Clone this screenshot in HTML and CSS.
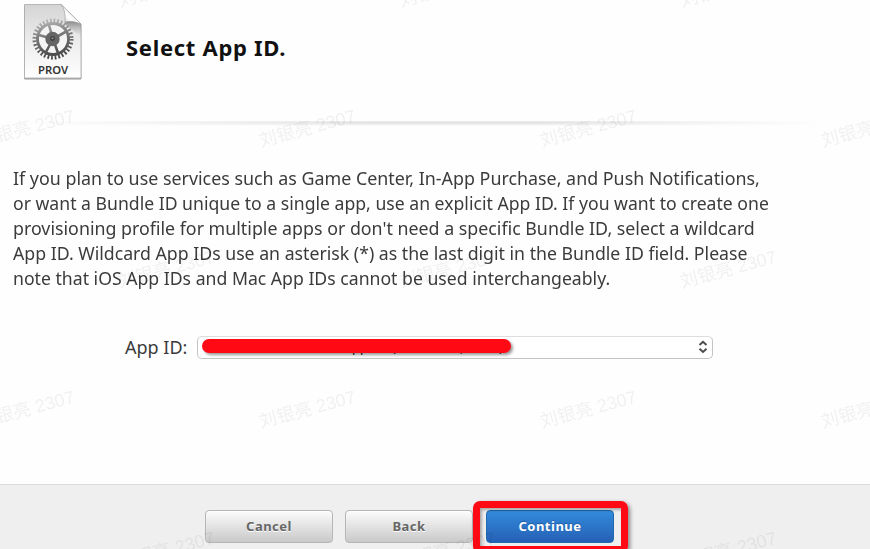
FILE: index.html
```
<!DOCTYPE html>
<html lang="en">
<head>
<meta charset="utf-8">
<title>Select App ID</title>
<link rel="stylesheet" href="styles.css">
</head>
<body>
<div class="page">
  <header class="header">
    <svg class="prov-icon" width="64" height="82" viewBox="0 0 64 82">
      <defs>
        <linearGradient id="paper" x1="0" y1="0" x2="0" y2="1"><stop offset="0" stop-color="#d5d5d5"/><stop offset=".6" stop-color="#f0f0f0"/><stop offset="1" stop-color="#fff"/></linearGradient>
        <linearGradient id="fold" x1="0" y1="1" x2="1" y2="0"><stop offset="0" stop-color="#b8b8b8"/><stop offset=".35" stop-color="#fff"/><stop offset="1" stop-color="#ddd"/></linearGradient>
        <linearGradient id="metal" gradientUnits="userSpaceOnUse" x1="28" y1="18" x2="36" y2="59"><stop offset="0" stop-color="#bbb"/><stop offset=".45" stop-color="#777"/><stop offset="1" stop-color="#424242"/></linearGradient>
        <linearGradient id="shade" x1="0" y1="0" x2="0" y2="1"><stop offset="0" stop-color="#555"/><stop offset="1" stop-color="#aaa" stop-opacity="0"/></linearGradient>
        <filter id="soft" x="-10%" y="-10%" width="120%" height="120%"><feDropShadow dx="0" dy="1" stdDeviation=".7" flood-opacity=".5"/></filter>
      </defs>
      <path d="M4.500 4.500H41L61 24V78H4.500Z" fill="url(#paper)" stroke="#aaa" stroke-width=".8" filter="url(#soft)"/>
      <path d="M45 20H55L61 24V37L45 24Z" fill="url(#shade)" opacity=".7"/>
      <circle cx="33" cy="39" r="14" fill="#f4f4f4"/>
      <g fill="none" stroke="url(#metal)">
        <circle cx="33" cy="39" r="18.400" stroke-width="4.200" stroke-dasharray="1.750 1.862"/>
        <circle cx="33" cy="39" r="15.500" stroke-width="2.800"/>
        <path d="M33 39L19 35M33 39L26 52M33 39L38 53M33 39L47 31M33 39L29 25" stroke-width="2.600"/>
      </g>
      <circle cx="32.500" cy="39" r="7.200" fill="#656565"/><circle cx="32.500" cy="38.500" r="2.400" fill="#3d3d3d"/><circle cx="32.500" cy="38.300" r="1" fill="#999"/>
      <path d="M41 4.500L61 24Q53 20 45 22Q46 10 41 4.500Z" fill="url(#fold)" stroke="#999" stroke-width=".6"/>
      <text class="prov-label" x="33" y="73.500" text-anchor="middle" textLength="30" lengthAdjust="spacingAndGlyphs">PROV</text>
    </svg>
    <h1 class="title">Select App ID.</h1>
  </header>
  <div class="divider"></div>
  <main class="content">
    <p class="description">
      <span class="line l1">If you plan to use services such as Game Center, In-App Purchase, and Push Notifications,</span>
      <span class="line l2">or want a Bundle ID unique to a single app, use an explicit App ID. If you want to create one</span>
      <span class="line l3">provisioning profile for multiple apps or don't need a specific Bundle ID, select a wildcard</span>
      <span class="line l4">App ID. Wildcard App IDs use an asterisk (*) as the last digit in the Bundle ID field. Please</span>
      <span class="line l5">note that iOS App IDs and Mac App IDs cannot be used interchangeably.</span>
    </p>
    <div class="field">
      <span class="field-label">App ID:</span>
      <div class="select">
        <span class="value"><span>pp</span><span>(</span><span>,</span><span>)</span></span>
        <span class="redaction"></span>
        <svg class="arrows" width="10" height="14" viewBox="0 0 10 14"><path d="M1.500 5L5 1.800L8.500 5M1.500 8.800L5 12L8.500 8.800" fill="none" stroke="#4b4b4b" stroke-width="1.900"/></svg>
      </div>
    </div>
  </main>
  <footer class="footer">
    <button class="button">Cancel</button>
    <button class="button">Back</button>
    <div class="primary-wrap"><button class="button primary">Continue</button><span class="highlight"></span></div>
  </footer>
  <svg class="watermark" width="870" height="549" viewBox="0 0 870 549">
    <g>
      <text transform="translate(120 7) rotate(-15)">刘银亮 2307</text>
      <text transform="translate(401 7) rotate(-15)">刘银亮 2307</text>
      <text transform="translate(682 7) rotate(-15)">刘银亮 2307</text>
      <text transform="translate(-20 147) rotate(-15)">刘银亮 2307</text>
      <text transform="translate(261 147) rotate(-15)">刘银亮 2307</text>
      <text transform="translate(542 147) rotate(-15)">刘银亮 2307</text>
      <text transform="translate(823 147) rotate(-15)">刘银亮 2307</text>
      <text transform="translate(120 288) rotate(-15)">刘银亮 2307</text>
      <text transform="translate(401 288) rotate(-15)">刘银亮 2307</text>
      <text transform="translate(682 288) rotate(-15)">刘银亮 2307</text>
      <text transform="translate(-20 428) rotate(-15)">刘银亮 2307</text>
      <text transform="translate(261 428) rotate(-15)">刘银亮 2307</text>
      <text transform="translate(542 428) rotate(-15)">刘银亮 2307</text>
      <text transform="translate(823 428) rotate(-15)">刘银亮 2307</text>
      <text transform="translate(120 569) rotate(-15)">刘银亮 2307</text>
      <text transform="translate(401 569) rotate(-15)">刘银亮 2307</text>
      <text transform="translate(682 569) rotate(-15)">刘银亮 2307</text>
    </g>
  </svg>
</div>
</body>
</html>
```
FILE: styles.css
```
* { box-sizing: border-box; }
body { margin: 0; background: #fefefe; font-family: "Noto Sans", sans-serif; color: #3b3b3b; }
.page { position: relative; width: 870px; height: 549px; overflow: hidden; display: flex; flex-direction: column; }
.header { display: flex; height: 121px; padding-left: 20px; flex: none; }
.prov-icon { flex: none; }
.prov-label { font: 600 10.500px "Noto Sans", sans-serif; fill: #333; }
.title { margin: 32px 0 0 42px; font-size: 22px; line-height: 30px; font-weight: 700; letter-spacing: .7px; color: #111; white-space: nowrap; }
.divider { height: 5px; flex: none; width: 835px; background: linear-gradient(90deg, #fefefe 2%, transparent 45%, transparent 65%, #fefefe 99%), linear-gradient(#ececec, #e2e2e2 40%, #fefefe); }
.content { flex: 1; padding: 40px 13px 0; }
.description { margin: 0; font-size: 18px; line-height: 25px; }
.line { display: block; white-space: nowrap; width: max-content; transform-origin: left; }
.l1 { transform: scaleX(.992); }
.l2 { transform: scaleX(.979); }
.l3 { transform: scaleX(.989); }
.l4 { transform: scaleX(.983); }
.l5 { transform: scaleX(.980); }
.field { display: flex; align-items: center; margin: 44px 0 0 112px; height: 24px; font-size: 18px; }
.field-label { width: 72px; white-space: nowrap; }
.select { position: relative; width: 516px; height: 23px; border: 1px solid #c4c4c4; border-top-color: #ddd; border-radius: 5px; background: #fff; display: flex; align-items: center; justify-content: flex-end; padding-right: 4px; }
.value { position: absolute; left: 154px; top: 0; display: grid; grid-template-columns: 40px 68px 39px 10px; font-size: 13px; line-height: 20px; color: #222; }
.redaction { position: absolute; left: 4px; top: 2px; width: 309px; height: 14px; border-radius: 7px; background: #ff0915; box-shadow: 2px 2px 3px rgba(0,0,0,.4); }
.footer { height: 65px; flex: none; border-top: 1px solid #dcdcdc; background: #efefef; display: flex; gap: 12px; padding: 25px 0 0 205px; }
.button { width: 128px; height: 33px; padding: 0 0 2px; border: 1px solid #b5b5b5; border-radius: 4px; background: linear-gradient(#fcfcfc, #c9c9c9); box-shadow: inset 0 1px 1px #fff; color: #666; font: 700 13px/28px "Noto Sans", sans-serif; letter-spacing: .5px; text-shadow: 0 1px 0 #fff; }
.primary { border-color: #2168ac; background: linear-gradient(#338bdc, #2560b5); color: #fff; text-shadow: 0 -1px 1px #2058a0; box-shadow: none; }
.primary-wrap { position: relative; height: 33px; margin-left: 1px; }
.highlight { position: absolute; left: -13px; top: -9px; width: 155px; height: 52px; border: 7px solid #ff0915; border-radius: 7px; box-shadow: 2px 2px 4px rgba(0,0,0,.45), inset 2px 2px 3px rgba(0,0,0,.3); }
.watermark { position: absolute; inset: 0; pointer-events: none; font: 18px "Liberation Sans", "Noto Sans CJK SC", sans-serif; }
.watermark g { fill: #000; opacity: .055; }
```
